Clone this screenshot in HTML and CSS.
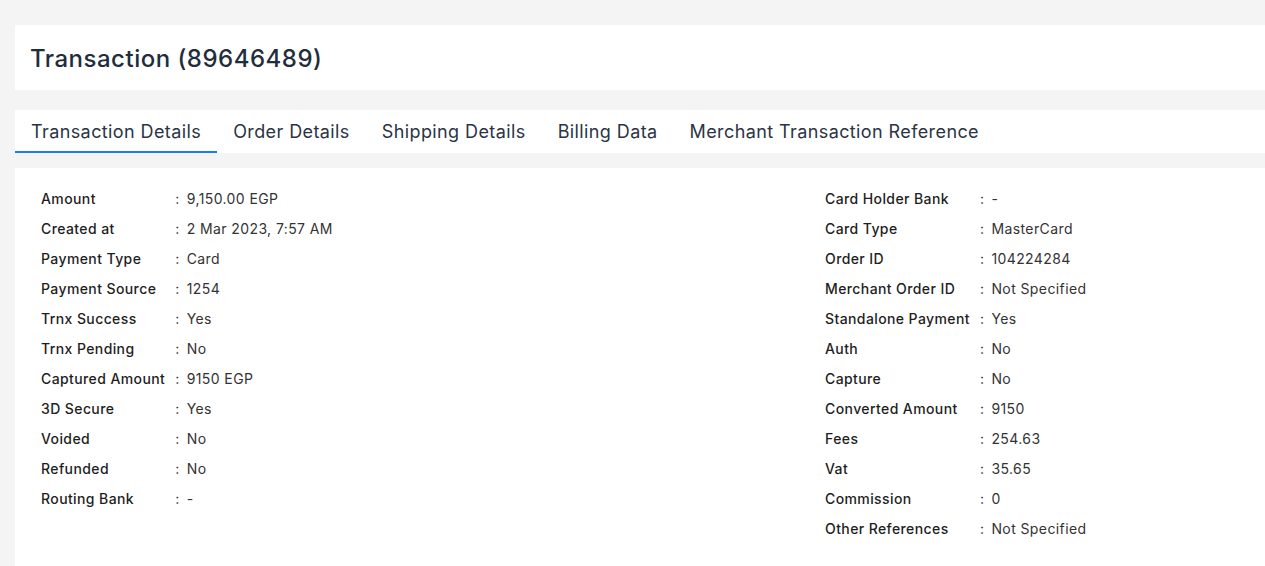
FILE: index.html
```html
<!DOCTYPE html>
<html lang="en">
<head>
<meta charset="utf-8">
<title>Transaction (89646489)</title>
<link rel="stylesheet" href="styles.css">
</head>
<body>
<div class="page">
  <header class="card header">
    <h1 class="title">Transaction (89646489)</h1>
  </header>
  <nav class="card tabs">
    <a class="tab active">Transaction Details</a>
    <a class="tab">Order Details</a>
    <a class="tab">Shipping Details</a>
    <a class="tab">Billing Data</a>
    <a class="tab">Merchant Transaction Reference</a>
  </nav>
  <section class="card details">
    <div class="kv">
      <span class="k">Amount</span><span class="c">:</span><span class="v">9,150.00 EGP</span>
      <span class="k">Created at</span><span class="c">:</span><span class="v">2 Mar 2023, 7:57 AM</span>
      <span class="k">Payment Type</span><span class="c">:</span><span class="v">Card</span>
      <span class="k">Payment Source</span><span class="c">:</span><span class="v">1254</span>
      <span class="k">Trnx Success</span><span class="c">:</span><span class="v">Yes</span>
      <span class="k">Trnx Pending</span><span class="c">:</span><span class="v">No</span>
      <span class="k">Captured Amount</span><span class="c">:</span><span class="v">9150 EGP</span>
      <span class="k">3D Secure</span><span class="c">:</span><span class="v">Yes</span>
      <span class="k">Voided</span><span class="c">:</span><span class="v">No</span>
      <span class="k">Refunded</span><span class="c">:</span><span class="v">No</span>
      <span class="k">Routing Bank</span><span class="c">:</span><span class="v">-</span>
    </div>
    <div class="kv">
      <span class="k">Card Holder Bank</span><span class="c">:</span><span class="v">-</span>
      <span class="k">Card Type</span><span class="c">:</span><span class="v">MasterCard</span>
      <span class="k">Order ID</span><span class="c">:</span><span class="v">104224284</span>
      <span class="k">Merchant Order ID</span><span class="c">:</span><span class="v">Not Specified</span>
      <span class="k">Standalone Payment</span><span class="c">:</span><span class="v">Yes</span>
      <span class="k">Auth</span><span class="c">:</span><span class="v">No</span>
      <span class="k">Capture</span><span class="c">:</span><span class="v">No</span>
      <span class="k">Converted Amount</span><span class="c">:</span><span class="v">9150</span>
      <span class="k">Fees</span><span class="c">:</span><span class="v">254.63</span>
      <span class="k">Vat</span><span class="c">:</span><span class="v">35.65</span>
      <span class="k">Commission</span><span class="c">:</span><span class="v">0</span>
      <span class="k">Other References</span><span class="c">:</span><span class="v">Not Specified</span>
    </div>
  </section>
</div>
</body>
</html>
```

FILE: styles.css
```css
html, body {
  margin: 0;
  padding: 0;
  background: #f4f4f4;
  font-family: Inter, "Open Sans", sans-serif;
}
.page {
  padding: 25px 0 0 15px;
  display: flex;
  flex-direction: column;
}
.card {
  background: #ffffff;
}
.header {
  height: 65px;
  display: flex;
  align-items: center;
  padding: 2px 0 0 15px;
  box-sizing: border-box;
}
.title {
  margin: 0;
  font-size: 24px;
  font-weight: 500;
  color: #1f2d3d;
  letter-spacing: 0.5px;
}
.tabs {
  margin-top: 20px;
  height: 43px;
  display: flex;
  align-items: stretch;
}
.tab {
  display: flex;
  align-items: center;
  padding: 2px 16px 0;
  font-size: 18px;
  letter-spacing: 0.4px;
  color: #2b3445;
  border-bottom: 2px solid transparent;
  box-sizing: border-box;
}
.tab.active {
  border-bottom-color: #1a7ef0;
}
.details {
  margin-top: 15px;
  padding: 15px 0 20px 26px;
  display: grid;
  grid-template-columns: 784px 1fr;
  align-items: start;
  min-height: 398px;
  box-sizing: border-box;
}
.kv {
  display: grid;
  grid-template-columns: max-content max-content 1fr;
  grid-auto-rows: 30px;
  align-items: center;
  font-size: 14px;
  letter-spacing: 0.4px;
}
.k {
  color: #1e1e1e;
  font-weight: 500;
  padding-right: 10px;
}
.c {
  color: #333333;
  padding-right: 7px;
}
.v {
  color: #333333;
  font-weight: 400;
}
```
